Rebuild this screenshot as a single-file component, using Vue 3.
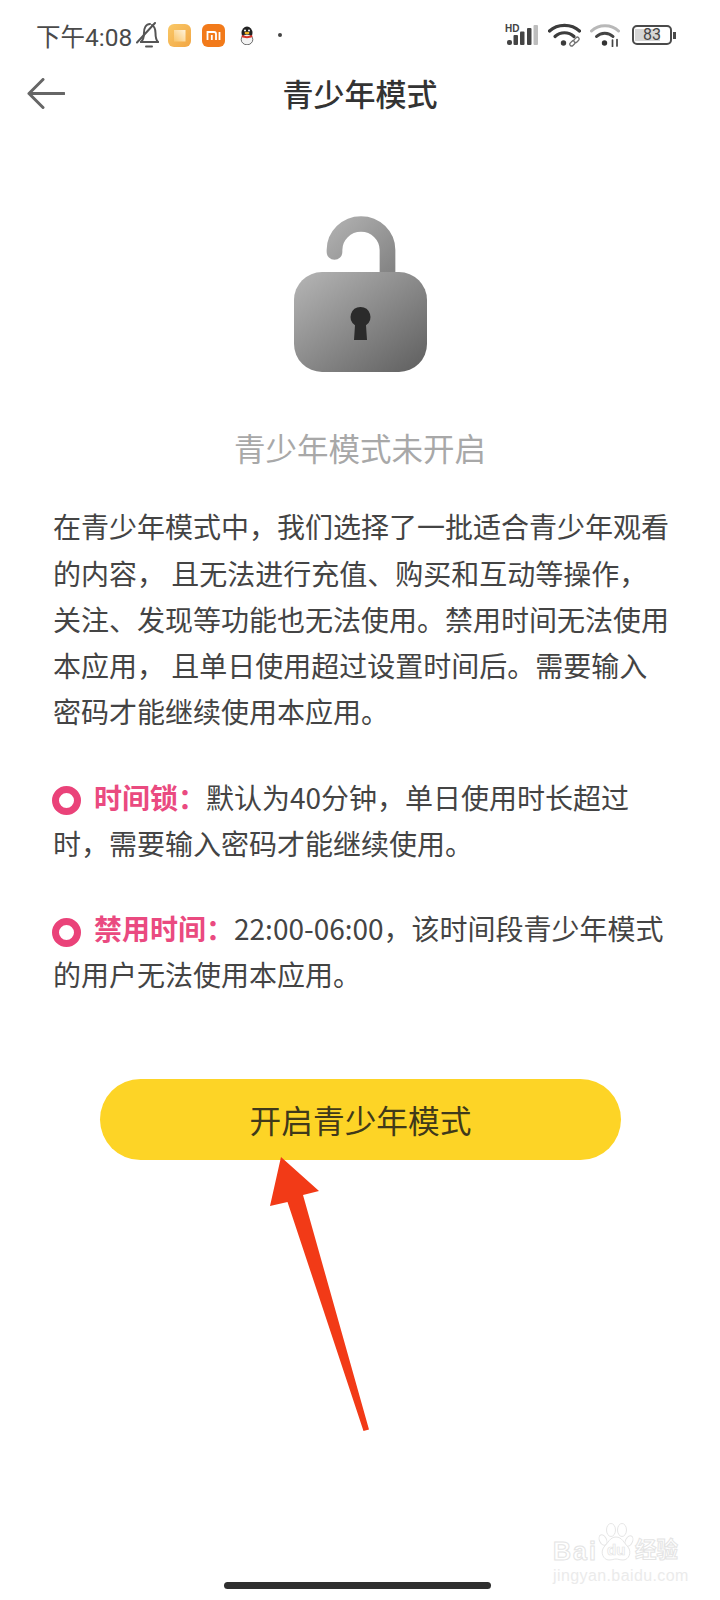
<script setup>
const paragraph = [
  '在青少年模式中，我们选择了一批适合青少年观看',
  '的内容， 且无法进行充值、购买和互动等操作，',
  '关注、发现等功能也无法使用。禁用时间无法使用',
  '本应用， 且单日使用超过设置时间后。需要输入',
  '密码才能继续使用本应用。'
]
const points = [
  { label: '时间锁：', first: '默认为40分钟，单日使用时长超过', second: '时，需要输入密码才能继续使用。' },
  { label: '禁用时间：', first: '22:00-06:00，该时间段青少年模式', second: '的用户无法使用本应用。' }
]
</script>

<template>
  <div class="page">
    <header class="status">
      <div class="status-left">
        <span class="time">下午4:08</span>
        <svg class="bell" viewBox="0 0 23 26" fill="none" stroke="#555" stroke-width="2" stroke-linecap="round" stroke-linejoin="round">
          <path d="M5 20H22" />
          <path d="M5 20c2.500-2.500 3-6 3-9 0-5 2-9 6-9" />
          <path d="M16 3c2.500 1.500 3.500 5 3.500 8 0 4 .5 7 2.500 9" />
          <path d="M1 20.500L19 1" />
          <path d="M10 24.500h6" />
        </svg>
        <svg class="app-icon" viewBox="0 0 23 23">
          <defs>
            <linearGradient id="g1" x1="0" y1="0" x2="1" y2="1">
              <stop offset="0" stop-color="#f9c867" />
              <stop offset="1" stop-color="#f2a644" />
            </linearGradient>
            <linearGradient id="g2" x1="0" y1="1" x2="1" y2="0">
              <stop offset="0" stop-color="#f9c56a" />
              <stop offset="1" stop-color="#fff3dc" />
            </linearGradient>
          </defs>
          <rect width="23" height="23" rx="6" fill="url(#g1)" />
          <path d="M6 6h11.500v11.500H6z" fill="url(#g2)" />
        </svg>
        <svg class="app-icon mi" viewBox="0 0 23 23">
          <rect width="23" height="23" rx="6" fill="#f27a1a" />
          <path d="M5.500 16V8h6.500a2 2 0 0 1 2 2v6M9.800 11v5M17.500 8v8" fill="none" stroke="#fff" stroke-width="1.800" />
        </svg>
        <svg class="qq" viewBox="0 0 16 19">
          <ellipse cx="8" cy="7" rx="5.500" ry="6.500" fill="#222" />
          <ellipse cx="8" cy="13.500" rx="5.800" ry="5.300" fill="#f3f3f3" stroke="#333" stroke-width=".7" />
          <path d="M3 9c3 1.500 7 1.500 10 0l.5 2c-3 1.500-8 1.500-11 0z" fill="#d8352a" />
          <ellipse cx="8" cy="7" rx="2.500" ry="1.200" fill="#f2b422" />
          <circle cx="6" cy="4.500" r="1" fill="#fff" />
          <circle cx="10" cy="4.500" r="1" fill="#fff" />
        </svg>
        <span class="dot"></span>
      </div>
      <div class="status-right">
        <svg class="signal" viewBox="0 0 34 22">
          <text x="1" y="8" class="hd">HD</text>
          <rect x="3" y="16" width="5" height="5" rx="2" fill="#444" />
          <rect x="9.500" y="11" width="4.500" height="10" rx="1" fill="#444" />
          <rect x="16" y="7.500" width="4.500" height="13.500" rx="1" fill="#444" />
          <rect x="23" y="4" width="4.500" height="17" rx="1" fill="#444" />
          <rect x="29.500" y="1" width="4.500" height="20" rx="1" fill="#bdbdbd" />
        </svg>
        <svg class="wifi" viewBox="0 0 33 24" fill="none" stroke="#3c3c3c" stroke-width="3.200" stroke-linecap="round">
          <path d="M1.500 8c8-7.500 22-7.500 30 0" />
          <path d="M7 13.500c5.500-5 13.500-5 19 0" />
          <circle cx="15.500" cy="20" r="2.700" fill="#3c3c3c" stroke="none" />
          <g fill="#fff" stroke="#707070" stroke-width="1.300">
            <rect x="21.500" y="18.500" width="6" height="3.600" rx="1.800" transform="rotate(-45 24.500 20.300)" />
            <rect x="25.500" y="15" width="6" height="3.600" rx="1.800" transform="rotate(-45 28.500 16.800)" />
          </g>
        </svg>
        <svg class="wifi2" viewBox="0 0 30 24" fill="none" stroke="#b8b8b8" stroke-width="3" stroke-linecap="round">
          <path d="M1.500 8c7-7 20-7 27 0" />
          <path d="M6.500 13.500c4.500-4.500 12-4.500 16.500 0" stroke="#444" />
          <circle cx="14.500" cy="20" r="2.700" fill="#333" stroke="none" />
          <path d="M22.500 17v6.500M27 16.500V23" stroke="#444" stroke-width="1.700" />
        </svg>
        <div class="battery">
          <div class="battery-body"><span class="battery-fill"></span><span class="battery-num">83</span></div>
          <span class="battery-nub"></span>
        </div>
      </div>
    </header>

    <nav class="nav">
      <svg class="back" viewBox="0 0 38 32" fill="none" stroke="#666" stroke-width="3" stroke-linecap="round" stroke-linejoin="round">
        <path d="M37 15.500H2M16 1.500L2 15.500l14 14" />
      </svg>
      <h1 class="title">青少年模式</h1>
    </nav>

    <main class="content">
      <svg class="lock" viewBox="0 0 134 160">
        <defs>
          <linearGradient id="shackle" x1="0" y1="0" x2="1" y2="1">
            <stop offset="0" stop-color="#aeaeae" />
            <stop offset="1" stop-color="#848484" />
          </linearGradient>
          <linearGradient id="body" x1="0" y1="0" x2="1" y2="1">
            <stop offset="0" stop-color="#b6b6b6" />
            <stop offset="1" stop-color="#5e5e5e" />
          </linearGradient>
        </defs>
        <path d="M40.500 38V36A26.500 26 0 0 1 93.500 36V60" fill="none" stroke="url(#shackle)" stroke-width="15.700" stroke-linecap="round" />
        <rect x="0" y="58" width="133" height="100" rx="28" fill="url(#body)" />
        <path d="M66.500 93a10 10 0 0 1 5.500 18.300L73 126H60l1-14.700A10 10 0 0 1 66.500 93z" fill="#2b2b2b" />
      </svg>
      <p class="subtitle">青少年模式未开启</p>

      <section class="paragraph">
        <span v-for="line in paragraph" :key="line" class="line">{{ line }}</span>
      </section>

      <section v-for="point in points" :key="point.label" class="point">
        <div class="point-first">
          <span class="ring"></span>
          <strong class="label">{{ point.label }}</strong>
          <span>{{ point.first }}</span>
        </div>
        <span class="line">{{ point.second }}</span>
      </section>

      <button class="cta" type="button">开启青少年模式</button>
    </main>

    <svg class="arrow" viewBox="0 0 720 1600">
      <path d="M281 1157L319 1191 303 1195 369 1429.500 363.500 1431 287.500 1202 270 1206z" fill="#f23a17" />
    </svg>

    <div class="home-bar"></div>

    <div class="watermark">
      <span class="wm-bai">Bai</span>
      <svg class="paw" viewBox="0 0 36 38" fill="#fff" stroke="#e6e6e6" stroke-width="1">
        <ellipse cx="5" cy="17" rx="3.500" ry="5.500" transform="rotate(-25 5 17)" />
        <ellipse cx="13" cy="7" rx="4.500" ry="6.500" />
        <ellipse cx="24" cy="7" rx="4.500" ry="6.500" />
        <ellipse cx="31" cy="18" rx="3.500" ry="5.500" transform="rotate(25 31 18)" />
        <path d="M18 14c6 0 8 6 12 10 4 5 1 13-5 13-3 0-5-1-7-1s-4 1-7 1c-6 0-9-8-5-13 4-4 6-10 12-10z" />
      </svg>
      <span class="wm-du">du</span>
      <span class="wm-jy">经验</span>
      <span class="wm-url">jingyan.baidu.com</span>
    </div>
  </div>
</template>

<style scoped>
.page {
  position: relative;
  width: 720px;
  height: 1600px;
  overflow: hidden;
  background: #fff;
  font-family: "Noto Sans CJK SC", "Noto Sans", sans-serif;
  color: #444;
}
.status {
  height: 70px;
  box-sizing: border-box;
  padding: 0 44px 0 36px;
  display: flex;
  justify-content: space-between;
  align-items: center;
}
.status-left { display: flex; align-items: center; }
.time {
  font-family: "Roboto", "Noto Sans CJK SC", sans-serif;
  font-size: 24.500px;
  color: #4a4a4a;
  width: 100px;
  white-space: nowrap;
}
.bell { width: 23px; height: 26px; margin-right: 9px; }
.app-icon { width: 23px; height: 23px; margin-right: 11px; }
.mi { margin-right: 14px; }
.qq { width: 16px; height: 19px; }
.dot {
  width: 4px;
  height: 4px;
  border-radius: 50%;
  background: #444;
  margin-left: 23px;
}
.status-right { display: flex; align-items: center; }
.signal { width: 34px; height: 22px; margin-right: 10px; }
.hd { font: 700 10px "Liberation Sans", sans-serif; fill: #444; }
.wifi { width: 33px; height: 24px; margin-right: 9px; }
.wifi2 { width: 30px; height: 24px; margin-right: 12px; }
.battery { display: flex; align-items: center; }
.battery-body {
  position: relative;
  width: 40px;
  height: 20px;
  box-sizing: border-box;
  border: 2px solid #4a4a4a;
  border-radius: 5px;
}
.battery-fill {
  position: absolute;
  left: 1px;
  top: 2px;
  bottom: 2px;
  width: 25px;
  background: #d6d6d6;
}
.battery-num {
  position: absolute;
  inset: 0;
  text-align: center;
  font: 16px/16px "Roboto", sans-serif;
  color: #444;
}
.battery-nub {
  width: 3px;
  height: 7px;
  margin-left: 1px;
  background: #4a4a4a;
}
.nav {
  position: relative;
  height: 50px;
  display: flex;
  align-items: center;
  justify-content: center;
}
.back {
  position: absolute;
  left: 27px;
  top: 8px;
  width: 38px;
  height: 32px;
}
.title {
  margin: 0 0 4px;
  font-size: 31px;
  font-weight: 500;
  color: #333;
  line-height: 46px;
}
.content {
  display: flex;
  flex-direction: column;
  align-items: flex-start;
  padding: 0 0 0 53px;
}
.lock {
  margin: 94px 0 0 241px;
  width: 134px;
  height: 160px;
  display: block;
}
.subtitle {
  width: 614px;
  margin: 50px 0 0;
  text-align: center;
  font-size: 31.500px;
  line-height: 46px;
  color: #a8a8a8;
}
.paragraph { margin-top: 33.400px; }
.line {
  display: block;
  font-size: 28px;
  line-height: 46.250px;
  white-space: nowrap;
  color: #444;
}
.point { margin-top: 39px; }
.point-first {
  display: flex;
  align-items: center;
  height: 46.250px;
  font-size: 28px;
  white-space: nowrap;
  color: #444;
}
.ring {
  width: 15px;
  height: 15px;
  border: 7.500px solid #ea4279;
  border-radius: 50%;
  margin: 8px 13px 0 -1px;
  flex: none;
}
.label {
  color: #ea4a80;
  font-weight: 700;
}
.cta {
  margin: 81.350px 0 0 47px;
  width: 521px;
  height: 81px;
  border: 0;
  border-radius: 41px;
  background: #fdd426;
  color: #40391a;
  font-family: inherit;
  font-size: 31.700px;
  padding: 0;
}
.arrow {
  position: absolute;
  inset: 0;
  width: 720px;
  height: 1600px;
  pointer-events: none;
}
.home-bar {
  position: absolute;
  left: 224px;
  top: 1582px;
  width: 267px;
  height: 7px;
  border-radius: 4px;
  background: #2f2f2f;
}
.watermark {
  position: absolute;
  left: 553px;
  top: 1522px;
  width: 130px;
  height: 64px;
  font-family: "Liberation Sans", "Noto Sans CJK SC", sans-serif;
  white-space: nowrap;
}
.wm-bai, .wm-du, .wm-jy {
  position: absolute;
  color: #fff;
  -webkit-text-stroke: 1px #e4e4e4;
  font-weight: 700;
}
.wm-bai { left: 0; top: 16px; font-size: 25px; line-height: 26px; letter-spacing: 2px; }
.paw {
  position: absolute;
  left: 45px;
  top: 1px;
  width: 36px;
  height: 38px;
}
.wm-du { left: 54px; top: 19px; font-size: 15px; line-height: 18px; -webkit-text-stroke-width: .7px; }
.wm-jy { left: 82px; top: 14px; font-size: 21.500px; line-height: 28px; }
.wm-url {
  position: absolute;
  left: 0;
  top: 45px;
  font-size: 16px;
  line-height: 18px;
  color: #ebebeb;
  letter-spacing: .4px;
}
</style>
